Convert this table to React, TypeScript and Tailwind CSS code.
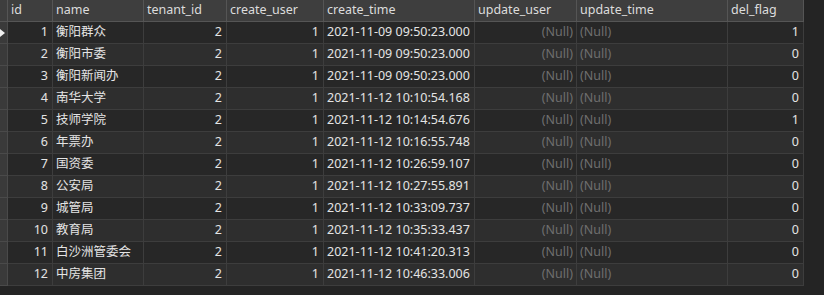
import React from "react";

const rows: [number, string, string, string][] = [
  [1, "衡阳群众", "2021-11-09 09:50:23.000", "1"],
  [2, "衡阳市委", "2021-11-09 09:50:23.000", "0"],
  [3, "衡阳新闻办", "2021-11-09 09:50:23.000", "0"],
  [4, "南华大学", "2021-11-12 10:10:54.168", "0"],
  [5, "技师学院", "2021-11-12 10:14:54.676", "1"],
  [6, "年票办", "2021-11-12 10:16:55.748", "0"],
  [7, "国资委", "2021-11-12 10:26:59.107", "0"],
  [8, "公安局", "2021-11-12 10:27:55.891", "0"],
  [9, "城管局", "2021-11-12 10:33:09.737", "0"],
  [10, "教育局", "2021-11-12 10:35:33.437", "0"],
  [11, "白沙洲管委会", "2021-11-12 10:41:20.313", "0"],
  [12, "中房集团", "2021-11-12 10:46:33.006", "0"],
];

const cell = "h-[22px] border-r border-b border-[#3d3d3d] flex items-center shrink-0 overflow-hidden whitespace-nowrap";
const hcell = "h-[22px] border-r border-b border-[#555555] flex items-center shrink-0 pl-[3px] text-[#dcdcdc]";

export default function App() {
  return (
    <div
      className="w-[824px] h-[295px] bg-[#242424] overflow-hidden text-[12.5px] leading-none"
      style={{ fontFamily: '"Noto Sans", "Noto Sans CJK SC", sans-serif' }}
    >
      <div className="flex w-[804px] bg-[#3e3e3e]">
        <div className={`${hcell} w-[8px] pl-0`} />
        <div className={`${hcell} w-[45px]`}>id</div>
        <div className={`${hcell} w-[91px]`}>name</div>
        <div className={`${hcell} w-[83px]`}>tenant_id</div>
        <div className={`${hcell} w-[97px]`}>create_user</div>
        <div className={`${hcell} w-[151px]`}>create_time</div>
        <div className={`${hcell} w-[102px]`}>update_user</div>
        <div className={`${hcell} w-[151px]`}>update_time</div>
        <div className={`${hcell} w-[76px]`}>del_flag</div>
      </div>
      {rows.map(([id, name, time, flag], i) => (
        <div key={id} className={`flex w-[804px] text-[#e4e4e4] ${i % 2 === 0 ? "bg-[#272727]" : "bg-[#2e2e2e]"}`}>
          <div className={`${cell} w-[8px] bg-[#3a3a3a] border-[#4a4a4a]`}>
            {i === 0 && (
              <svg width="6" height="10" viewBox="0 0 6 10" className="block">
                <path d="M0 1 L5 5 L0 9 Z" fill="#f0f0f0" />
              </svg>
            )}
          </div>
          <div className={`${cell} w-[45px] justify-end pr-[4px]`}>{id}</div>
          <div className={`${cell} w-[91px] pl-[3px]`}>{name}</div>
          <div className={`${cell} w-[83px] justify-end pr-[4px]`}>2</div>
          <div className={`${cell} w-[97px] justify-end pr-[4px]`}>1</div>
          <div className={`${cell} w-[151px] pl-[3px]`}>{time}</div>
          <div className={`${cell} w-[102px] justify-end pr-[3px] text-[#6f6f6f]`}>(Null)</div>
          <div className={`${cell} w-[151px] pl-[3px] text-[#6f6f6f]`}>(Null)</div>
          <div className={`${cell} w-[76px] justify-end pr-[4px]`}>{flag}</div>
        </div>
      ))}
    </div>
  );
}
